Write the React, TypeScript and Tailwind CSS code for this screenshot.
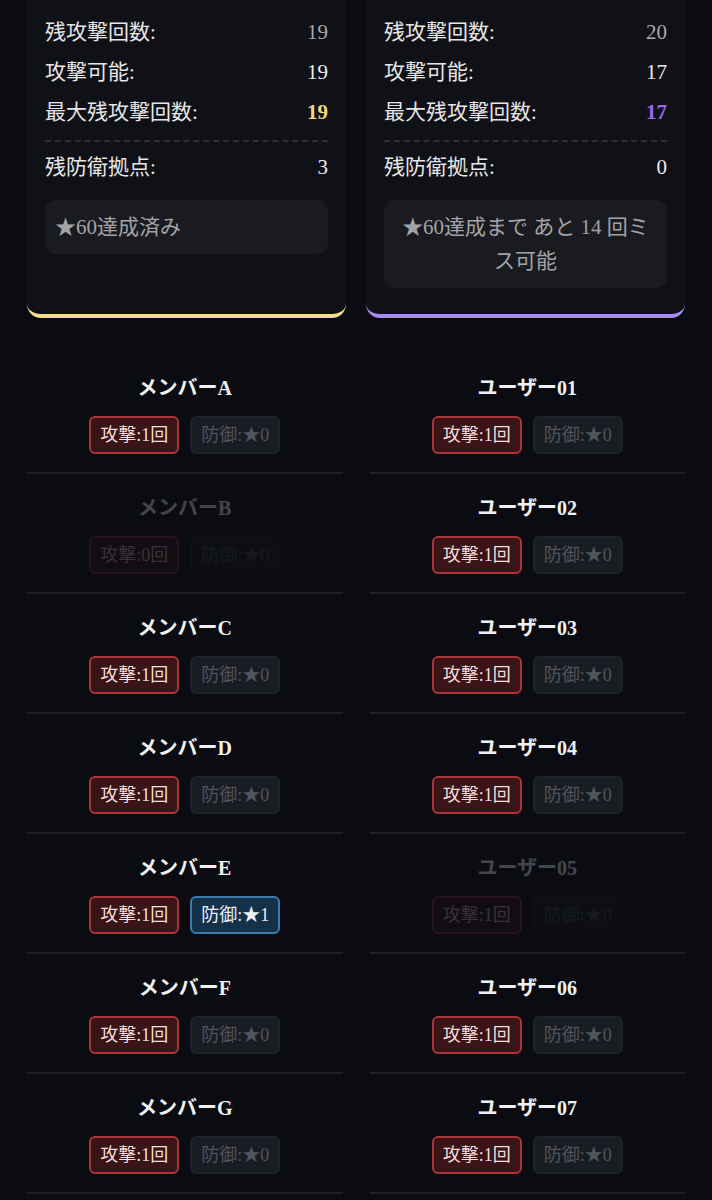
import React from "react";

const FONT = { fontFamily: '"Liberation Serif", "Noto Sans CJK JP", serif' };

type Row = { name: string; atk: number; def: number; dim?: boolean };

const left: Row[] = [
  { name: "メンバーA", atk: 1, def: 0 },
  { name: "メンバーB", atk: 0, def: 0, dim: true },
  { name: "メンバーC", atk: 1, def: 0 },
  { name: "メンバーD", atk: 1, def: 0 },
  { name: "メンバーE", atk: 1, def: 1 },
  { name: "メンバーF", atk: 1, def: 0 },
  { name: "メンバーG", atk: 1, def: 0 },
];

const right: Row[] = [
  { name: "ユーザー01", atk: 1, def: 0 },
  { name: "ユーザー02", atk: 1, def: 0 },
  { name: "ユーザー03", atk: 1, def: 0 },
  { name: "ユーザー04", atk: 1, def: 0 },
  { name: "ユーザー05", atk: 1, def: 0, dim: true },
  { name: "ユーザー06", atk: 1, def: 0 },
  { name: "ユーザー07", atk: 1, def: 0 },
];

function StatRow({ label, value, valueClass }: { label: string; value: string; valueClass: string }) {
  return (
    <div className="flex items-center justify-between h-[40px]">
      <span className="text-[#e6e6e6]">{label}</span>
      <span className={valueClass}>{value}</span>
    </div>
  );
}

function Card({
  values,
  accent,
  border,
  note,
  center,
}: {
  values: [string, string, string, string];
  accent: string;
  border: string;
  note: string;
  center?: boolean;
}) {
  return (
    <div className={`bg-[#101116] rounded-b-[14px] border-b-4 ${border} px-[18px] pt-[13px] pb-[26px] text-[21px]`}>
      <StatRow label="残攻撃回数:" value={values[0]} valueClass="text-[#a9a9ad]" />
      <StatRow label="攻撃可能:" value={values[1]} valueClass="text-[#ececec]" />
      <StatRow label="最大残攻撃回数:" value={values[2]} valueClass={`${accent} font-bold`} />
      <div className="border-t-2 border-dashed border-[#2c2e34] mt-[7px] mb-[6px]" />
      <StatRow label="残防衛拠点:" value={values[3]} valueClass="text-[#ececec]" />
      <div
        className={`mt-[12px] bg-[#1a1b20] rounded-[10px] px-[10px] py-[10px] leading-[34px] text-[#a3a3a7] ${
          center ? "text-center" : "text-left"
        }`}
      >
        {note}
      </div>
    </div>
  );
}

function Member({ r }: { r: Row }) {
  return (
    <div className="border-b-2 border-[#1e2026] pt-[20px] pb-[18px]">
      <div className="flex flex-col items-center gap-[14px]">
        <div className={`text-[20px] leading-[28px] font-bold text-[#f0f0f0] ${r.dim ? "opacity-25" : ""}`}>{r.name}</div>
        <div className={`flex gap-[11px] text-[18px] leading-[24px] ${r.dim ? "opacity-[0.18]" : ""}`}>
          <div className="h-[38px] w-[90px] flex items-center justify-center rounded-[6px] border-2 border-[#a8363b] bg-[#3a1417] text-[#f3dede]">
            攻撃:{r.atk}回
          </div>
          {r.def > 0 ? (
            <div className="h-[38px] w-[90px] flex items-center justify-center rounded-[6px] border-2 border-[#3a7cab] bg-[#153049] text-[#e8eff6]">
              防御:★{r.def}
            </div>
          ) : (
            <div className="h-[38px] w-[90px] flex items-center justify-center rounded-[6px] border-2 border-[#1f2228] bg-[#191c22] text-[#51555d]">
              防御:★{r.def}
            </div>
          )}
        </div>
      </div>
    </div>
  );
}

export default function App() {
  return (
    <div className="min-h-screen bg-[#0a0c12] pb-10" style={FONT}>
      <div className="grid grid-cols-2 gap-[20px] px-[27px]">
        <Card values={["19", "19", "19", "3"]} accent="text-[#f4d67a]" border="border-[#f6dc92]" note="★60達成済み" />
        <Card
          values={["20", "17", "17", "0"]}
          accent="text-[#9a68ee]"
          border="border-[#a98af0]"
          note="★60達成まで あと 14 回ミス可能"
          center
        />
      </div>
      <div className="grid grid-cols-2 gap-[27px] px-[27px] mt-[36px]">
        <div>
          {left.map((r) => (
            <Member key={r.name} r={r} />
          ))}
        </div>
        <div>
          {right.map((r) => (
            <Member key={r.name} r={r} />
          ))}
        </div>
      </div>
    </div>
  );
}
